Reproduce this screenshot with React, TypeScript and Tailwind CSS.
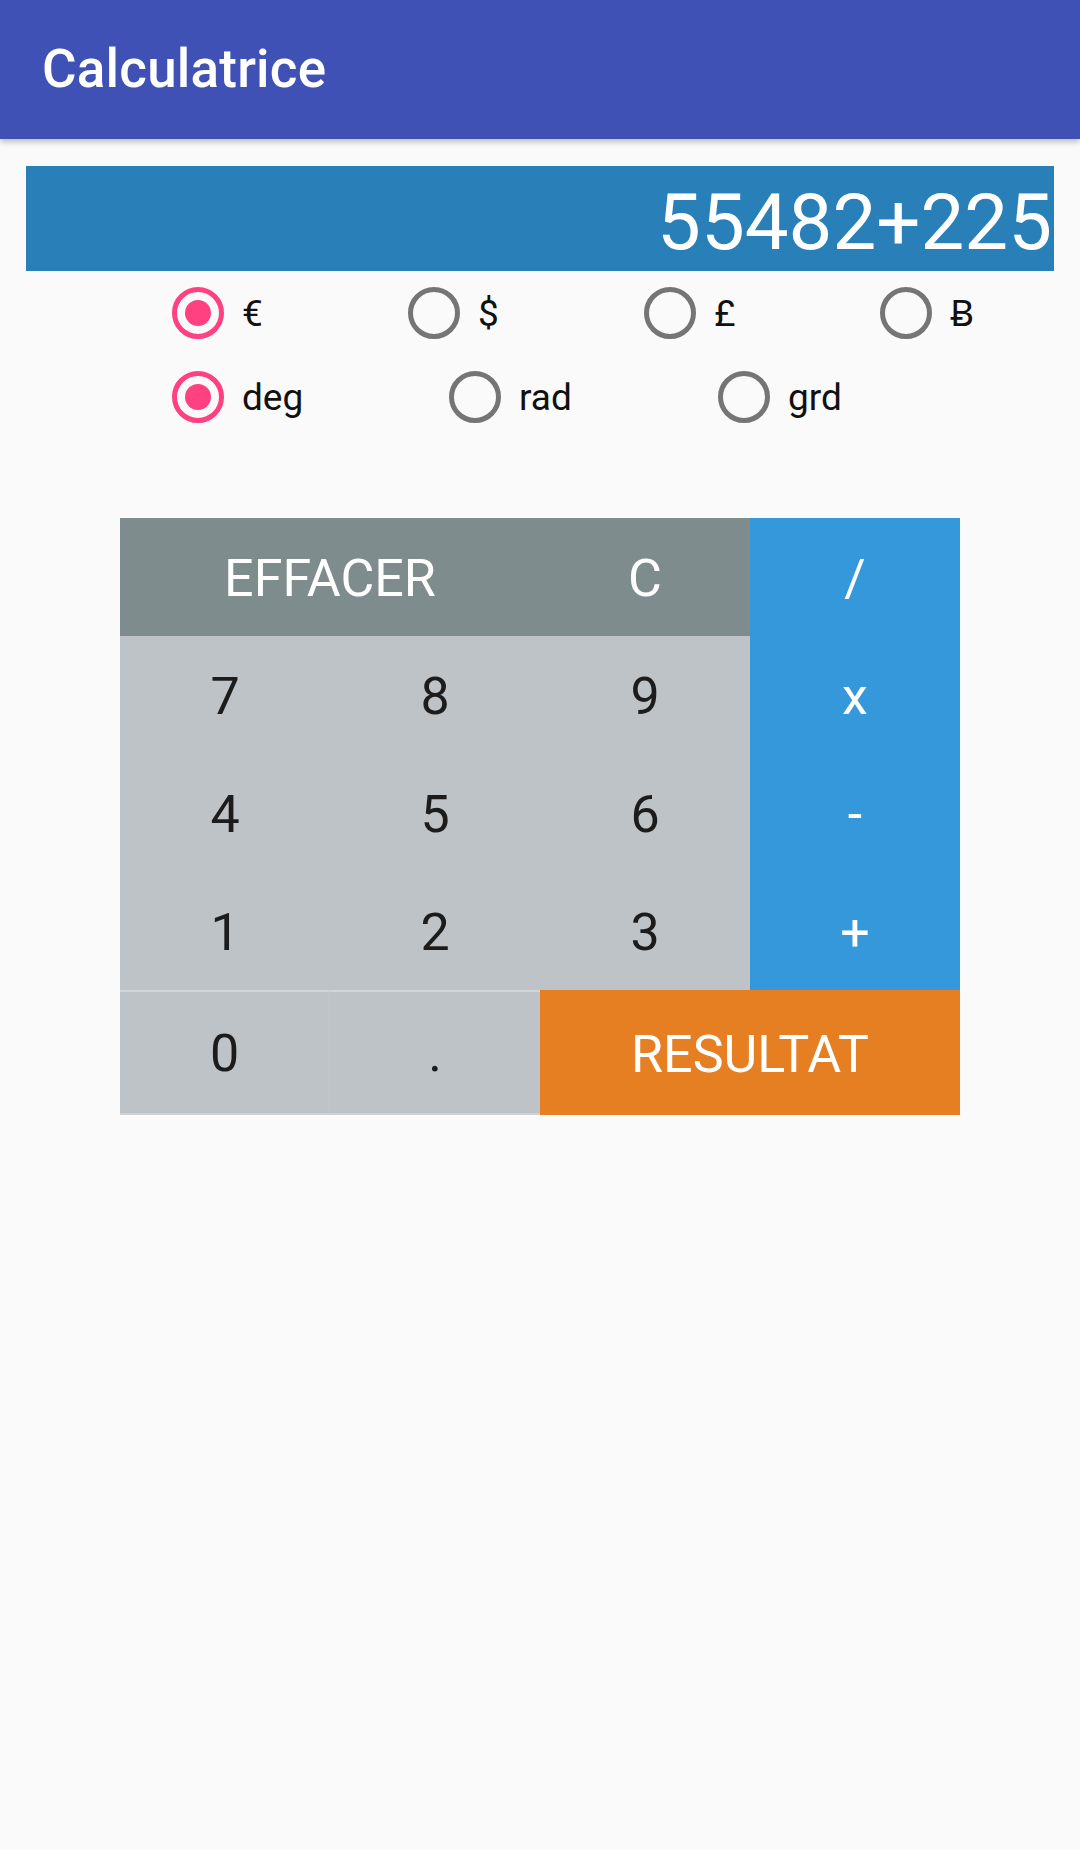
import React from "react";

const font = { fontFamily: "Roboto, 'Noto Sans', sans-serif" };

const Radio: React.FC<{ label: string; checked?: boolean; width: string }> = ({ label, checked, width }) => (
    <div className={`flex items-center ${width}`}>
        <div
            className={`ml-[16px] w-[52px] h-[52px] rounded-full border-[5px] flex items-center justify-center ${
                checked ? "border-[#ff4081]" : "border-[#757575]"
            }`}
        >
            {checked && <div className="w-[26px] h-[26px] rounded-full bg-[#ff4081]" />}
        </div>
        <span className="ml-[18px] text-[37px] leading-none text-[#111]">{label}</span>
    </div>
);

const Calculatrice: React.FC = () => {
    return (
        <div className="w-[1080px] h-[1850px] bg-[#fafafa] overflow-hidden" style={font}>
            {/* barre d'application */}
            <div className="h-[139px] bg-[#3f51b5] flex items-center pl-[42px] shadow-[0_3px_6px_rgba(0,0,0,0.25)] relative">
                <h1 className="text-white text-[53px] font-medium tracking-[0.2px]">Calculatrice</h1>
            </div>

            {/* ecran */}
            <div className="mx-[26px] mt-[27px] h-[105px] bg-[#2980b9] flex items-center justify-end overflow-hidden">
                <span className="text-white text-[78px] leading-none pr-[2px] mt-[8px]">55482+225</span>
            </div>

            {/* devises */}
            <div className="flex h-[84px] pl-[156px]">
                <Radio label="€" checked width="w-[236px]" />
                <Radio label="$" width="w-[236px]" />
                <Radio label="£" width="w-[236px]" />
                <Radio label="Ƀ" width="w-[200px]" />
            </div>

            {/* angles */}
            <div className="flex h-[84px] pl-[156px]">
                <Radio label="deg" checked width="w-[277px]" />
                <Radio label="rad" width="w-[269px]" />
                <Radio label="grd" width="w-[200px]" />
            </div>

            {/* clavier */}
            <div className="ml-[120px] mt-[79px] w-[840px] grid grid-cols-4 text-[52px] leading-none">
                <div className="col-span-2 h-[118px] pt-[4px] bg-[#7f8c8d] text-white flex items-center justify-center">EFFACER</div>
                <div className="h-[118px] pt-[4px] bg-[#7f8c8d] text-white flex items-center justify-center">C</div>
                <div className="h-[118px] pt-[4px] bg-[#3498db] text-white flex items-center justify-center">/</div>

                {[
                    ["7", "8", "9", "x"],
                    ["4", "5", "6", "-"],
                    ["1", "2", "3", "+"],
                ].map((row) =>
                    row.map((k, i) => (
                        <div
                            key={k}
                            className={`h-[118px] pt-[4px] flex items-center justify-center ${
                                i === 3 ? "bg-[#3498db] text-white" : "bg-[#bdc3c7] text-[#1c1c1c]"
                            }`}
                        >
                            {k}
                        </div>
                    ))
                )}

                <div className="h-[125px] pt-[2px] bg-[#bdc3c7] text-[#1c1c1c] flex items-center justify-center border-t-[2px] border-t-[#d3d6d9] border-b-[2px] border-b-[#cfd2d5] border-r border-r-[#c3c7ca]">
                    0
                </div>
                <div className="h-[125px] pt-[2px] bg-[#bdc3c7] text-[#1c1c1c] flex items-center justify-center border-t-[2px] border-t-[#d3d6d9] border-b-[2px] border-b-[#cfd2d5]">
                    .
                </div>
                <div className="col-span-2 h-[125px] pt-[4px] bg-[#e67e22] text-white flex items-center justify-center">RESULTAT</div>
            </div>
        </div>
    );
};

export default Calculatrice;
